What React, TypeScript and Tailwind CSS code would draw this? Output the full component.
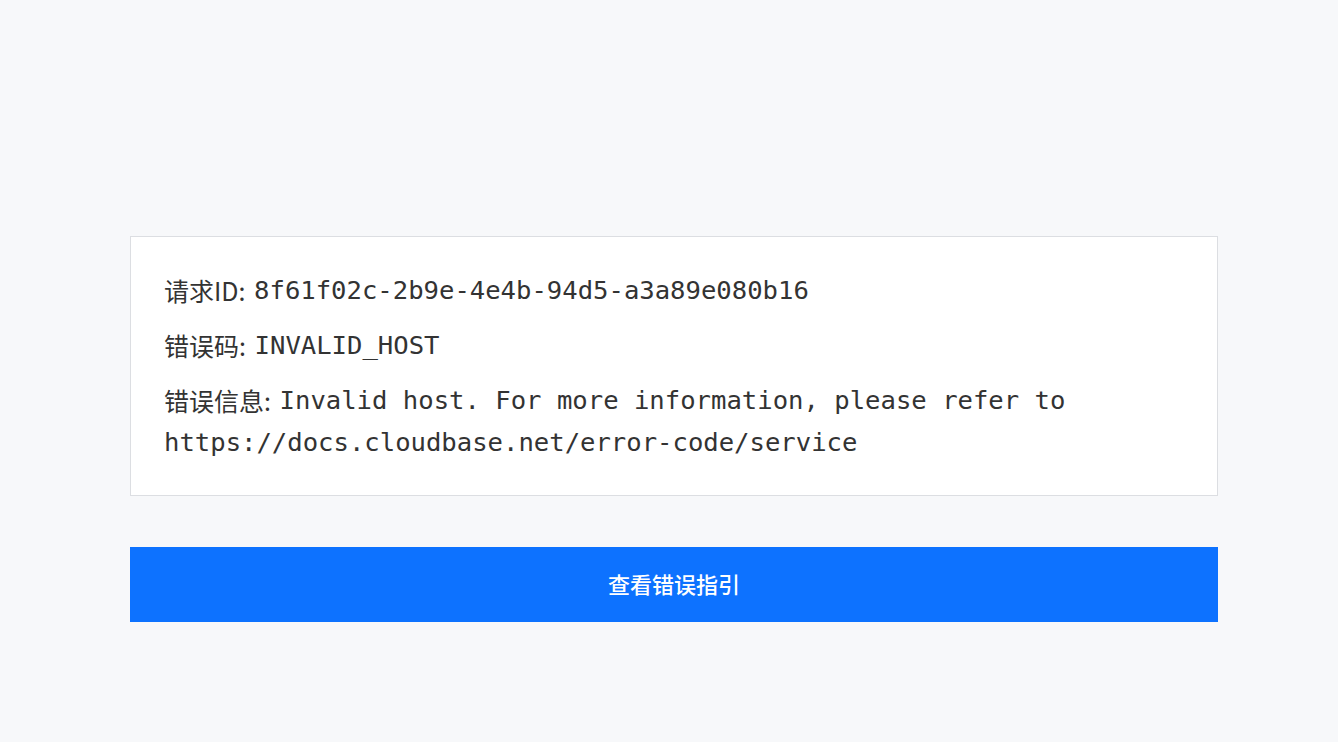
export default function App() {
  const label = "mr-[3px] align-top leading-[42px] font-['Noto_Sans_CJK_SC','Noto_Sans',sans-serif] text-[25px] text-[#333]";
  const mono = "align-top leading-[42px] font-['DejaVu_Sans_Mono','Liberation_Mono',monospace] text-[25.6px] text-[#333]";
  return (
    <div className="min-h-[742px] w-full bg-[#f7f8fa] pt-[236px]">
      <div className="ml-[130px] w-[1088px]">
        <div className="border border-[#dcdee2] bg-white px-[33px] py-[32px]">
          <p className="mb-[13px] text-[25.6px] leading-[42px]">
            <span className={label}>请求ID: </span>
            <span className={mono}>8f61f02c-2b9e-4e4b-94d5-a3a89e080b16</span>
          </p>
          <p className="mb-[13px] text-[25.6px] leading-[42px]">
            <span className={label}>错误码: </span>
            <span className={mono}>INVALID_HOST</span>
          </p>
          <p className="text-[25.6px] leading-[42px]">
            <span className={label}>错误信息: </span>
            <span className={mono}>
              Invalid host. For more information, please refer to https://docs.cloudbase.net/error-code/service
            </span>
          </p>
        </div>
        <button className="mt-[51px] flex h-[75px] w-full items-center justify-center pb-[3px] bg-[#0d72ff] font-['Noto_Sans_CJK_SC',sans-serif] text-[22px] font-medium text-white">
          查看错误指引
        </button>
      </div>
    </div>
  );
}
